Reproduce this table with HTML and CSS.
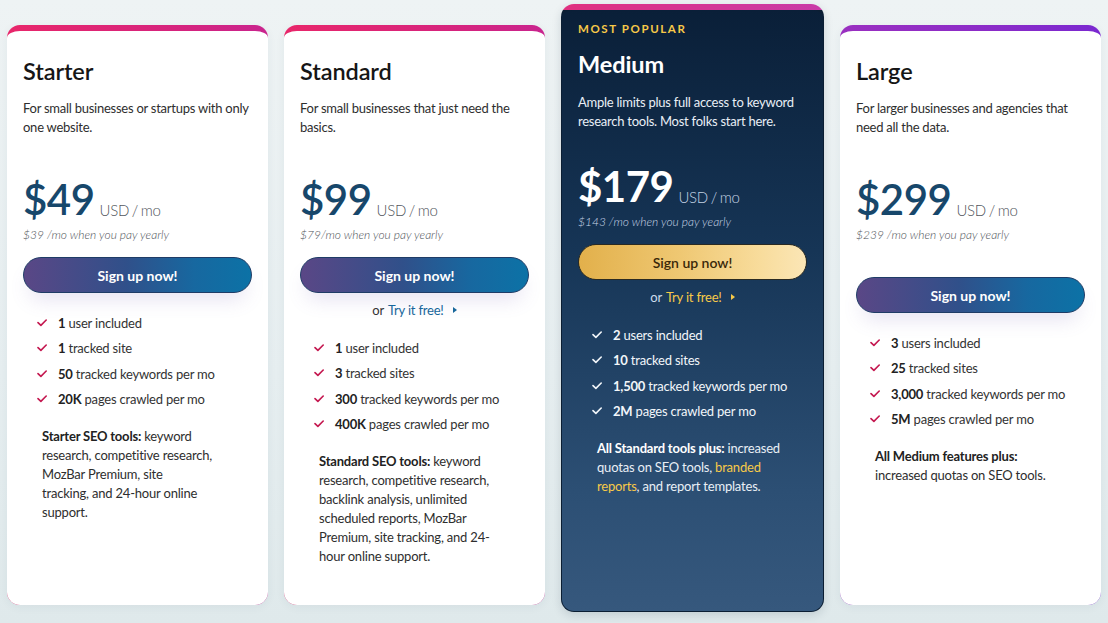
FILE: index.html
```html
<!DOCTYPE html>
<html lang="en">
<head>
<meta charset="utf-8">
<title>Pricing</title>
<link rel="stylesheet" href="styles.css">
</head>
<body>
<main class="plans">
  <section class="card card--pink">
    <h2 class="card__title">Starter</h2>
    <p class="card__desc">For small businesses or startups with only one website.</p>
    <div class="price"><span class="price__amount">$49</span><span class="price__unit">USD / mo</span></div>
    <p class="price__yearly">$39 /mo when you pay yearly</p>
    <a class="btn" href="#">Sign up now!</a>
    <ul class="features">
      <li><svg class="check" viewBox="0 0 10 8"><path d="M1 3.6 L3.9 6.4 L9.2 1"/></svg><span><b>1</b> user included</span></li>
      <li><svg class="check" viewBox="0 0 10 8"><path d="M1 3.6 L3.9 6.4 L9.2 1"/></svg><span><b>1</b> tracked site</span></li>
      <li><svg class="check" viewBox="0 0 10 8"><path d="M1 3.6 L3.9 6.4 L9.2 1"/></svg><span><b>50</b> tracked keywords per mo</span></li>
      <li><svg class="check" viewBox="0 0 10 8"><path d="M1 3.6 L3.9 6.4 L9.2 1"/></svg><span><b>20K</b> pages crawled per mo</span></li>
    </ul>
    <p class="tools"><b>Starter SEO tools:</b> keyword research, competitive research, MozBar Premium, site<br>tracking, and 24-hour online support.</p>
  </section>

  <section class="card card--pink">
    <h2 class="card__title">Standard</h2>
    <p class="card__desc">For small businesses that just need the basics.</p>
    <div class="price"><span class="price__amount">$99</span><span class="price__unit">USD / mo</span></div>
    <p class="price__yearly">$79/mo when you pay yearly</p>
    <a class="btn" href="#">Sign up now!</a>
    <p class="try">or <a href="#">Try it free!</a><span class="try__arrow"></span></p>
    <ul class="features features--after-try">
      <li><svg class="check" viewBox="0 0 10 8"><path d="M1 3.6 L3.9 6.4 L9.2 1"/></svg><span><b>1</b> user included</span></li>
      <li><svg class="check" viewBox="0 0 10 8"><path d="M1 3.6 L3.9 6.4 L9.2 1"/></svg><span><b>3</b> tracked sites</span></li>
      <li><svg class="check" viewBox="0 0 10 8"><path d="M1 3.6 L3.9 6.4 L9.2 1"/></svg><span><b>300</b> tracked keywords per mo</span></li>
      <li><svg class="check" viewBox="0 0 10 8"><path d="M1 3.6 L3.9 6.4 L9.2 1"/></svg><span><b>400K</b> pages crawled per mo</span></li>
    </ul>
    <p class="tools"><b>Standard SEO tools:</b> keyword research, competitive research, backlink analysis, unlimited scheduled reports, MozBar Premium, site tracking, and 24-hour online support.</p>
  </section>

  <section class="card card--featured">
    <p class="card__eyebrow">MOST POPULAR</p>
    <h2 class="card__title">Medium</h2>
    <p class="card__desc">Ample limits plus full access to keyword research tools. Most folks start here.</p>
    <div class="price"><span class="price__amount">$179</span><span class="price__unit">USD / mo</span></div>
    <p class="price__yearly">$143 /mo when you pay yearly</p>
    <a class="btn btn--gold" href="#">Sign up now!</a>
    <p class="try">or <a href="#">Try it free!</a><span class="try__arrow"></span></p>
    <ul class="features features--after-try">
      <li><svg class="check" viewBox="0 0 10 8"><path d="M1 3.6 L3.9 6.4 L9.2 1"/></svg><span><b>2</b> users included</span></li>
      <li><svg class="check" viewBox="0 0 10 8"><path d="M1 3.6 L3.9 6.4 L9.2 1"/></svg><span><b>10</b> tracked sites</span></li>
      <li><svg class="check" viewBox="0 0 10 8"><path d="M1 3.6 L3.9 6.4 L9.2 1"/></svg><span><b>1,500</b> tracked keywords per mo</span></li>
      <li><svg class="check" viewBox="0 0 10 8"><path d="M1 3.6 L3.9 6.4 L9.2 1"/></svg><span><b>2M</b> pages crawled per mo</span></li>
    </ul>
    <p class="tools"><b>All Standard tools plus:</b> increased quotas on SEO tools, <a href="#">branded reports</a>, and report templates.</p>
  </section>

  <section class="card card--purple">
    <h2 class="card__title">Large</h2>
    <p class="card__desc">For larger businesses and agencies that need all the data.</p>
    <div class="price"><span class="price__amount">$299</span><span class="price__unit">USD / mo</span></div>
    <p class="price__yearly">$239 /mo when you pay yearly</p>
    <a class="btn btn--lower" href="#">Sign up now!</a>
    <ul class="features">
      <li><svg class="check" viewBox="0 0 10 8"><path d="M1 3.6 L3.9 6.4 L9.2 1"/></svg><span><b>3</b> users included</span></li>
      <li><svg class="check" viewBox="0 0 10 8"><path d="M1 3.6 L3.9 6.4 L9.2 1"/></svg><span><b>25</b> tracked sites</span></li>
      <li><svg class="check" viewBox="0 0 10 8"><path d="M1 3.6 L3.9 6.4 L9.2 1"/></svg><span><b>3,000</b> tracked keywords per mo</span></li>
      <li><svg class="check" viewBox="0 0 10 8"><path d="M1 3.6 L3.9 6.4 L9.2 1"/></svg><span><b>5M</b> pages crawled per mo</span></li>
    </ul>
    <p class="tools"><b>All Medium features plus:</b> increased quotas on SEO tools.</p>
  </section>
</main>
</body>
</html>
```

FILE: styles.css
```css
* { box-sizing: border-box; }

html, body {
  margin: 0;
  height: 100%;
}

body {
  font-family: Lato, "Noto Sans", "Liberation Sans", sans-serif;
  background: linear-gradient(180deg, #eef3f4 0%, #e6eef0 60%, #dfe9eb 100%);
  color: #2b2b2b;
  overflow: hidden;
}

.plans {
  display: flex;
  align-items: flex-start;
  gap: 16px;
  padding: 0 7px;
}

.card {
  flex: 1 1 0;
  min-width: 0;
  height: 580px;
  margin-top: 25px;
  padding: 26px 16px 0;
  border: 0 solid transparent;
  border-top-width: 6px;
  border-radius: 13px;
  background:
    linear-gradient(#ffffff, #ffffff) padding-box,
    linear-gradient(90deg, #e8266a 0%, #d4237f 70%, #c9248e 100%) border-box;
  box-shadow: 0 2px 10px rgba(30, 70, 90, 0.06);
}

.card--purple {
  background:
    linear-gradient(#ffffff, #ffffff) padding-box,
    linear-gradient(90deg, #9a2fc0 0%, #8a2bc8 60%, #7a28d0 100%) border-box;
}

.card--featured {
  height: 608px;
  margin-top: 4px;
  padding-top: 12px;
  border-width: 1px;
  border-top-width: 6px;
  border-color: transparent;
  color: #eef3f8;
  box-shadow: 0 3px 10px rgba(20, 40, 60, 0.15);
  background:
    linear-gradient(180deg, #0a1f38 0%, #163556 40%, #2c4f74 80%, #36587d 100%) padding-box,
    linear-gradient(180deg, transparent 6px, #0b1e33 6px) border-box,
    linear-gradient(90deg, #e0307f 0%, #c93ba8 100%) border-box;
}

.card__eyebrow {
  margin: 0;
  font-size: 11.5px;
  line-height: 14px;
  font-weight: 700;
  letter-spacing: 1.6px;
  color: #f7c948;
}

.card__title {
  margin: 0;
  font-size: 23.5px;
  line-height: 28px;
  font-weight: 600;
  color: #161616;
  letter-spacing: -0.1px;
}

.card--featured .card__title {
  margin-top: 14px;
  color: #ffffff;
  font-weight: 700;
}

.card__desc {
  margin: 14px 0 0;
  font-size: 13px;
  line-height: 19px;
  letter-spacing: -0.25px;
  color: #2e2e2e;
}

.card--featured .card__desc {
  margin-top: 15px;
  color: #e9eff6;
}

.price {
  display: flex;
  align-items: flex-end;
  margin-top: 41px;
}

.card--featured .price {
  margin-top: 34px;
}

.price__amount {
  font-size: 42px;
  line-height: 42px;
  font-weight: 600;
  color: #17476b;
  letter-spacing: -0.5px;
}

.card--featured .price__amount {
  color: #ffffff;
  font-weight: 700;
}

.price__unit {
  margin: 0 0 2px 5px;
  font-size: 15px;
  line-height: 15px;
  font-weight: 300;
  color: #51565c;
  letter-spacing: -0.3px;
  word-spacing: -1px;
}

.card--featured .price__unit {
  color: #c3d3e4;
}

.price__yearly {
  margin: 7px 0 0;
  font-size: 12px;
  line-height: 16px;
  font-style: italic;
  font-weight: 300;
  color: #4e5257;
}

.card--featured .price__yearly {
  color: #c7d6e6;
}

.btn {
  display: flex;
  align-items: center;
  justify-content: center;
  height: 36px;
  margin-top: 14px;
  border: 1px solid #1f3c66;
  border-radius: 18px;
  background: linear-gradient(90deg, #5a4786 0%, #30508a 45%, #1768a0 75%, #0c72a6 100%);
  color: #ffffff;
  font-size: 14px;
  font-weight: 700;
  text-decoration: none;
  box-shadow: 0 12px 20px -6px rgba(110, 90, 180, 0.18);
}

.btn--lower {
  margin-top: 34px;
}

.btn--gold {
  border-color: #2a2a22;
  background: linear-gradient(90deg, #e2b04b 0%, #efc873 45%, #f8dc9c 80%, #fbe6b6 100%);
  color: #3a2809;
  font-weight: 600;
  box-shadow: none;
}

.try {
  display: flex;
  align-items: center;
  justify-content: center;
  gap: 4px;
  margin: 7px 0 0;
  font-size: 13px;
  line-height: 20px;
  letter-spacing: -0.2px;
  color: #333333;
}

.try a {
  color: #17669a;
  text-decoration: none;
}

.try__arrow {
  width: 0;
  height: 0;
  margin-left: 5px;
  border-top: 3.5px solid transparent;
  border-bottom: 3.5px solid transparent;
  border-left: 4px solid #17669a;
}

.card--featured .try {
  color: #cddcec;
}

.card--featured .try a {
  color: #f7c948;
}

.card--featured .try__arrow {
  border-left-color: #f7c948;
}

.features {
  list-style: none;
  margin: 17px 0 0;
  padding: 0 0 0 14px;
}

.features--after-try {
  margin-top: 15px;
}

.features li {
  display: flex;
  align-items: center;
  height: 25.5px;
  font-size: 13px;
  letter-spacing: -0.2px;
  color: #333333;
}

.features b {
  font-weight: 700;
  color: #222222;
}

.check {
  flex: none;
  width: 10px;
  height: 8px;
  margin-right: 11px;
  fill: none;
  stroke: #c4174f;
  stroke-width: 1.6;
  stroke-linecap: round;
  stroke-linejoin: round;
}

.card--featured .features li,
.card--featured .features b {
  color: #f2f6fa;
}

.card--featured .check {
  stroke: #f2f6fa;
}

.tools {
  margin: 15px 0 0;
  padding-left: 19px;
  max-width: 194px;
  font-size: 13px;
  line-height: 19px;
  letter-spacing: -0.2px;
  color: #2e2e2e;
}

.tools b {
  font-weight: 700;
  color: #222222;
}

.card--featured .tools {
  max-width: 212px;
  color: #e9eff6;
}

.card--featured .tools b {
  color: #ffffff;
}

.card--featured .tools a {
  color: #f7c948;
  text-decoration: none;
}
```
